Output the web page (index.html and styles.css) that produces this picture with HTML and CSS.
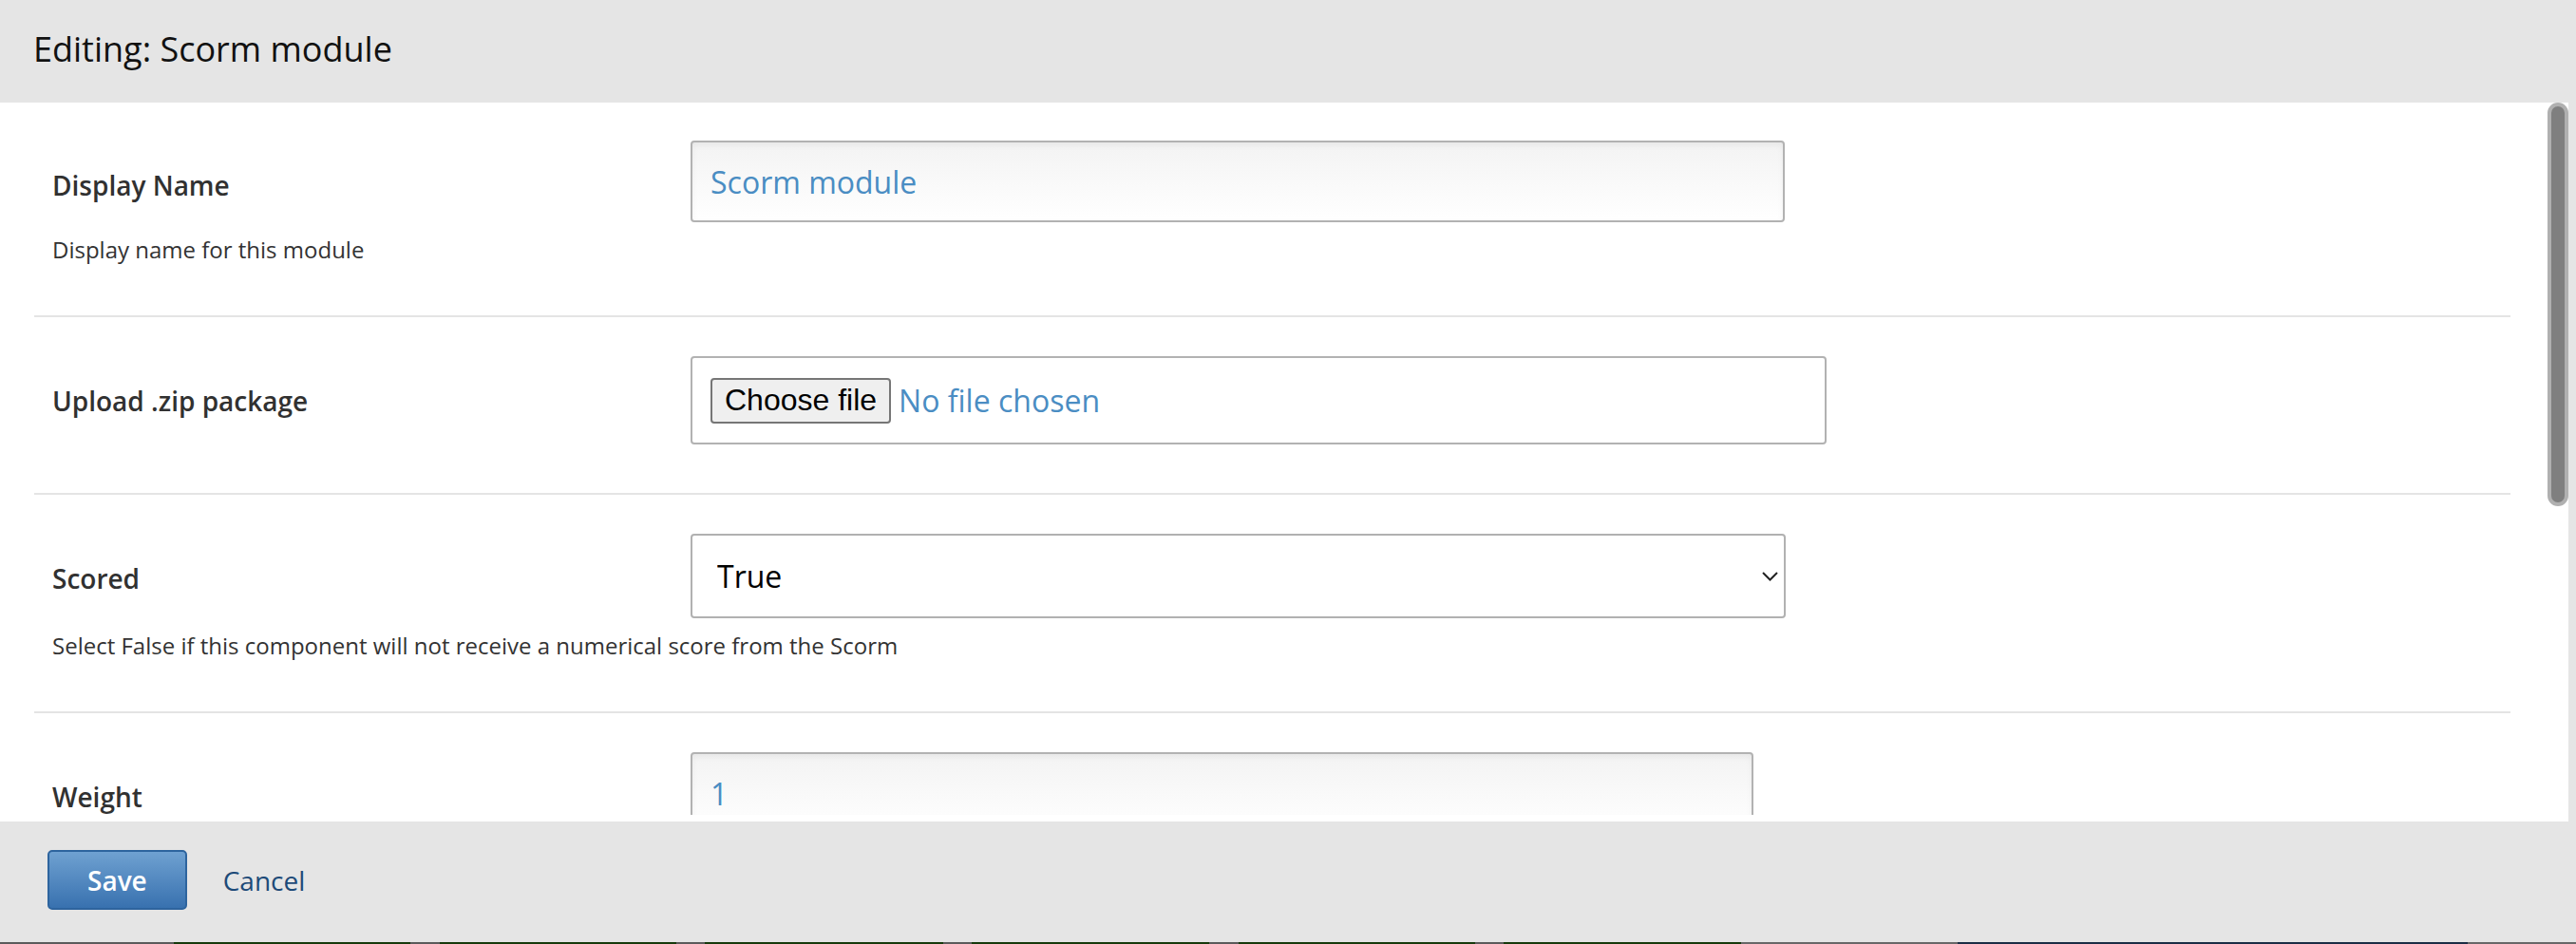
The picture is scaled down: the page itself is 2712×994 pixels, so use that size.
FILE: index.html
```html
<!DOCTYPE html>
<html lang="en">
<head>
  <meta charset="UTF-8">
  <title>Editing: Scorm module</title>
  <link rel="stylesheet" href="styles.css">
</head>
<body>
  <div class="modal">
    <div class="modal-header">
      <h2 class="modal-title">Editing: Scorm module</h2>
    </div>

    <div class="modal-body">
      <div class="modal-scroll">
        <ul class="settings-list">
          <li class="setting">
            <label class="setting-label" for="display_name">Display Name</label>
            <input class="setting-input" id="display_name" type="text" value="Scorm module">
            <span class="setting-help">Display name for this module</span>
          </li>

          <li class="setting">
            <span class="setting-label">Upload .zip package</span>
            <div class="setting-file">
              <input class="file-native" id="package" type="file" accept=".zip">
              <label class="file-button" for="package">Choose file</label>
              <span class="file-name">No file chosen</span>
            </div>
          </li>

          <li class="setting">
            <label class="setting-label" for="has_score">Scored</label>
            <div class="select-wrap">
              <select class="setting-select" id="has_score">
                <option selected>True</option>
                <option>False</option>
              </select>
              <svg class="select-arrow" width="17" height="10" viewBox="0 0 17 10">
                <polyline points="1,1 8.5,8.5 16,1" fill="none" stroke="#222" stroke-width="2"/>
              </svg>
            </div>
            <span class="setting-help">Select False if this component will not receive a numerical score from the Scorm</span>
          </li>

          <li class="setting">
            <label class="setting-label" for="weight">Weight</label>
            <input class="setting-input setting-input--weight" id="weight" type="text" value="1">
          </li>
        </ul>
      </div>
      <div class="scroll-thumb"></div>
    </div>

    <div class="modal-footer">
      <button class="btn-save">Save</button>
      <a class="btn-cancel" href="#">Cancel</a>
    </div>
  </div>
</body>
</html>
```

FILE: styles.css
```css
* {
  box-sizing: border-box;
}

html, body {
  margin: 0;
  height: 994px;
  overflow: hidden;
}

body {
  font-family: 'Open Sans', 'Noto Sans', sans-serif;
  color: #313131;
  /* page behind the modal peeks out at the bottom */
  background: linear-gradient(to right,
    #5b5b5b 0 183px, #173a0c 183px 432px, #5b5b5b 432px 463px,
    #173a0c 463px 712px, #5b5b5b 712px 742px, #173a0c 742px 993px,
    #5b5b5b 993px 1023px, #173a0c 1023px 1273px, #5b5b5b 1273px 1304px,
    #173a0c 1304px 1553px, #5b5b5b 1553px 1583px, #173a0c 1583px 1833px,
    #686868 1833px 2061px, #1b2d45 2061px 2598px, #686868 2598px);
}

.modal {
  height: 992px;
  display: flex;
  flex-direction: column;
  background: #e5e5e5;
}

.modal-header {
  height: 108px;
  flex: 0 0 108px;
  display: flex;
  align-items: center;
  padding: 0 35px 6px;
}

.modal-title {
  margin: 0;
  font-size: 36px;
  font-weight: 400;
  color: #111;
}

.modal-body {
  position: relative;
  flex: 1;
  min-height: 0;
  display: flex;
  flex-direction: column;
  margin-right: 8px;
  padding-bottom: 7px;
  background: #fff;
}

.modal-scroll {
  flex: 1;
  min-height: 0;
  padding-right: 22px;
  overflow: hidden;
}

/* overlay scrollbar thumb, scrolled to the top */
.scroll-thumb {
  position: absolute;
  top: 0;
  right: 0;
  width: 22px;
  height: 425px;
  background: #7f7f7f;
  border: 4px solid #b0b0b0;
  border-radius: 11px;
}

.settings-list {
  list-style: none;
  margin: 0 39px 0 36px;
  padding: 0;
}

.setting {
  display: flex;
  flex-wrap: wrap;
  align-items: flex-start;
  padding: 41px 0 51px 19px;
  border-bottom: 2px solid #e4e4e4;
}

.setting:first-child {
  padding-top: 40px;
}

.setting:last-child {
  border-bottom: none;
}

.setting-label {
  flex: 0 0 672px;
  margin-top: 28px;
  font-size: 28px;
  font-weight: 600;
  line-height: 38px;
  color: #313131;
}

.setting-input {
  width: 1152px;
  height: 86px;
  padding: 0 19px;
  border: 2px solid #b2b2b2;
  border-radius: 4px;
  background: linear-gradient(to bottom, #f3f3f3, #fff);
  box-shadow: inset 0 3px 6px rgba(0, 0, 0, 0.05);
  font-family: 'Open Sans', sans-serif;
  font-size: 32px;
  color: #4a8dc3;
  outline: none;
}

.setting-input--weight {
  width: 1119px;
}

.setting-file {
  width: 1196px;
  height: 93px;
  display: flex;
  align-items: center;
  gap: 8px;
  padding: 0 19px;
  border: 2px solid #b2b2b2;
  border-radius: 4px;
  background: #fff;
}

.file-native {
  display: none;
}

.file-button {
  height: 48px;
  display: flex;
  align-items: center;
  padding: 0 13px;
  border: 2px solid #767676;
  border-radius: 4px;
  background: #efefef;
  font-family: 'Liberation Sans', Arial, sans-serif;
  font-size: 32px;
  color: #000;
  cursor: pointer;
}

.file-name {
  font-size: 32px;
  color: #4a8dc3;
}

.select-wrap {
  position: relative;
  width: 1153px;
}

.setting-select {
  appearance: none;
  -webkit-appearance: none;
  width: 100%;
  height: 89px;
  padding: 0 26px;
  border: 2px solid #b1b1b1;
  border-radius: 4px;
  background: #fff;
  font-family: 'Open Sans', sans-serif;
  font-size: 32px;
  color: #000;
  outline: none;
}

.select-arrow {
  position: absolute;
  right: 8px;
  top: 40px;
}

.setting-help {
  flex: 0 0 100%;
  margin-top: 10px;
  font-size: 24px;
  line-height: 37px;
  color: #333;
}

.modal-footer {
  height: 127px;
  flex: 0 0 127px;
  display: flex;
  align-items: center;
  gap: 38px;
  padding: 0 50px 4px;
}

.btn-save {
  height: 63px;
  padding: 0 40px;
  border: 2px solid #2d649e;
  border-radius: 5px;
  background: linear-gradient(to bottom, #6fa1d1, #3871af);
  font-family: 'Open Sans', sans-serif;
  font-size: 28px;
  font-weight: 600;
  color: #fff;
  cursor: pointer;
}

.btn-cancel {
  font-size: 28px;
  color: #1d4a78;
  text-decoration: none;
}
```
